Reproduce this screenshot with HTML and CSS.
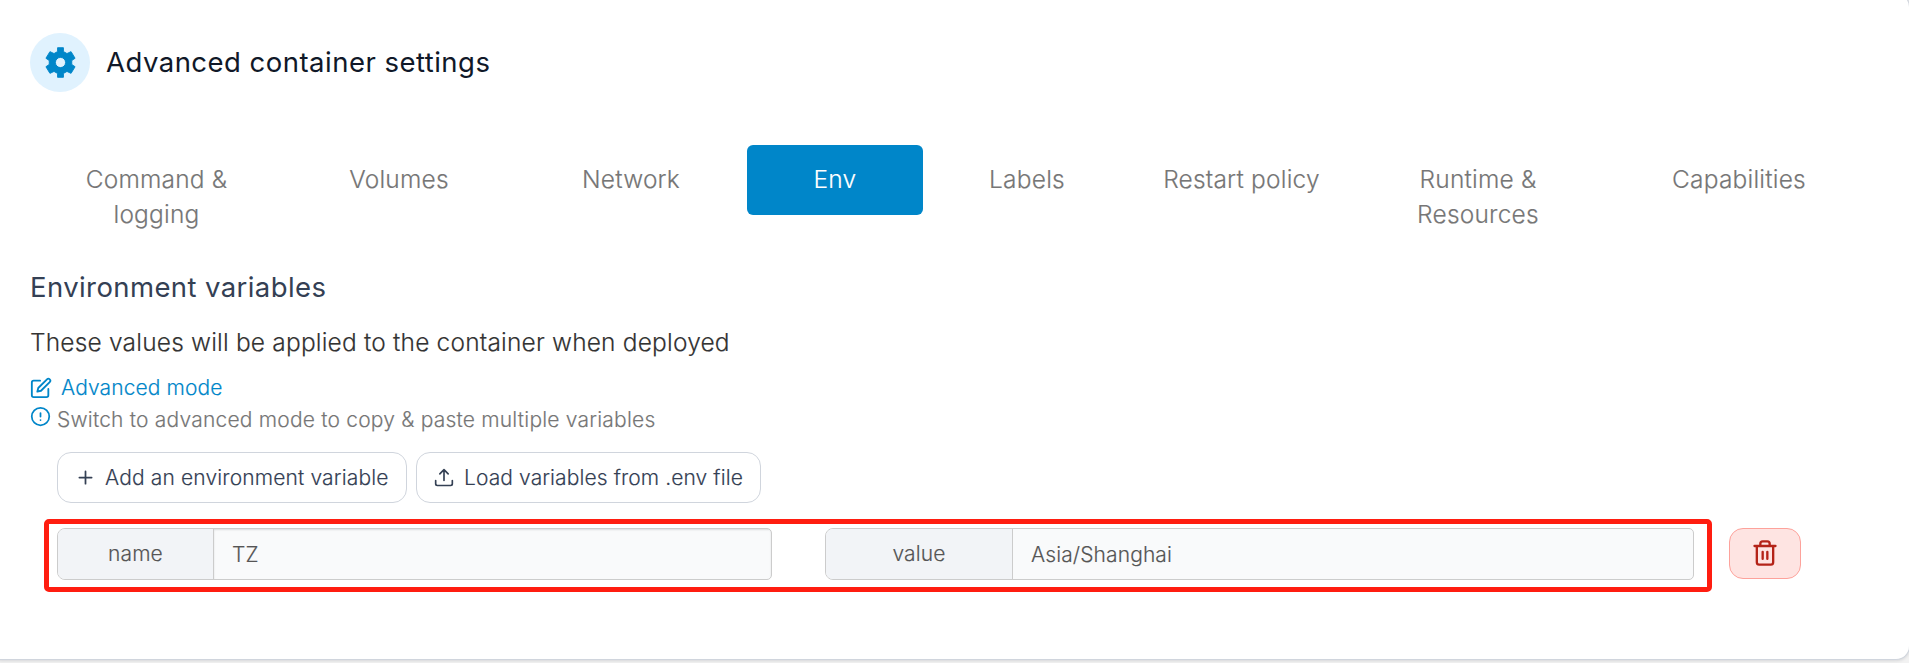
FILE: index.html
```html
<!DOCTYPE html>
<html lang="en">
<head>
<meta charset="utf-8">
<title>Advanced container settings</title>
<link rel="stylesheet" href="styles.css">
</head>
<body>
<main class="card">
  <header class="header">
    <span class="header-icon">
      <svg width="37" height="37" viewBox="0 0 24 24" fill="currentColor"><path fill-rule="evenodd" d="M10.100 2.400h3.800v2.500l2.300 1.300 2.650-1.250 2.600 4.300-2.150 1.500v2.500l2.150 1.500-2.600 4.300-2.650-1.250-2.300 1.300v2.500h-3.800v-2.500l-2.300-1.300-2.650 1.250-2.600-4.300 2.150-1.500v-2.500l-2.150-1.500 2.600-4.300 2.650 1.250 2.300-1.300zM12 8.700a3.300 3.300 0 1 0 0 6.600 3.300 3.300 0 0 0 0-6.600z" stroke="currentColor" stroke-width=".6" stroke-linejoin="round"/></svg>
    </span>
    <h1 class="title">Advanced container settings</h1>
  </header>

  <nav class="tabs">
    <a class="tab">Command &amp;<br>logging</a>
    <a class="tab">Volumes</a>
    <a class="tab">Network</a>
    <a class="tab tab-active">Env</a>
    <a class="tab">Labels</a>
    <a class="tab">Restart policy</a>
    <a class="tab">Runtime &amp;<br>Resources</a>
    <a class="tab">Capabilities</a>
  </nav>

  <h2 class="section-title">Environment variables</h2>
  <p class="description">These values will be applied to the container when deployed</p>

  <a class="mode-link">
    <svg class="icon" width="22" height="22" viewBox="0 0 24 24"><path d="M11 4H4a2 2 0 0 0-2 2v14a2 2 0 0 0 2 2h14a2 2 0 0 0 2-2v-7"/><path d="M18.500 2.500a2.121 2.121 0 0 1 3 3L12 15l-4 1 1-4z"/></svg>
    <span class="mode-text">Advanced mode</span>
  </a>
  <p class="hint">
    <svg class="icon hint-icon" width="21" height="21" viewBox="0 0 24 24"><circle cx="12" cy="12" r="10"/><path d="M12 8v4M12 16h.01"/></svg>
    <span class="hint-text">Switch to advanced mode to copy &amp; paste multiple variables</span>
  </p>

  <div class="actions">
    <button class="button button-add"><svg class="icon" width="21" height="21" viewBox="0 0 24 24"><path d="M12 5v14M5 12h14"/></svg><span class="add-text">Add an environment variable</span></button>
    <button class="button button-load"><svg class="icon" width="20" height="20" viewBox="0 0 24 24"><path d="M22 15v4a2 2 0 0 1-2 2H4a2 2 0 0 1-2-2v-4M17 7l-5-5-5 5M12 2v13"/></svg><span class="load-text">Load variables from .env file</span></button>
  </div>

  <div class="row">
    <div class="highlight">
      <div class="field field-name">
        <span class="label">name</span>
        <span class="value value-inset">TZ</span>
      </div>
      <div class="field field-value">
        <span class="label">value</span>
        <span class="value">Asia/Shanghai</span>
      </div>
    </div>
    <button class="delete" aria-label="Delete"><svg class="icon" width="28" height="28" viewBox="0 0 24 24"><path d="M3 6h18M19 6v14a2 2 0 0 1-2 2H7a2 2 0 0 1-2-2V6M8 6V4a2 2 0 0 1 2-2h4a2 2 0 0 1 2 2v2M10 11v6M14 11v6"/></svg></button>
  </div>
</main>
</body>
</html>
```
FILE: styles.css
```css
* { box-sizing: border-box; }

body {
  margin: 0;
  height: 663px;
  overflow: hidden;
  background: #f2f2f2;
  font-family: Inter, "Liberation Sans", sans-serif;
  font-weight: 300;
  -webkit-text-stroke: 0.15px currentColor;
  color: #333;
}

.card {
  height: 667px;
  margin-top: -7px;
  margin-left: -1px;
  margin-right: -1px;
  padding: 39px 34px 0 31px;
  background: #fff;
  border: 1px solid #d0d5dd;
  border-left: 0;
  border-radius: 0 14px 14px 0;
  box-shadow: 0 1px 3px rgba(16, 24, 40, 0.12);
}

h1, h2, p { margin: 0; }

.icon {
  flex: none;
  fill: none;
  stroke: currentColor;
  stroke-width: 2;
  stroke-linecap: round;
  stroke-linejoin: round;
}

.header {
  display: flex;
  align-items: center;
  gap: 16px;
  height: 59px;
}

.header-icon {
  display: flex;
  align-items: center;
  justify-content: center;
  width: 60px;
  height: 59px;
  border-radius: 50%;
  background: #e0f2fe;
  color: #0086c9;
}

.title {
  margin-top: -1px;
  font-size: 27.5px;
  font-weight: 400;
  -webkit-text-stroke: 0;
  line-height: 40px;
  letter-spacing: 0.48px;
  color: #101828;
}

.tabs {
  display: grid;
  grid-template-columns: 253px 232px 232px 176px 208px 221px 252px 270px;
  align-items: start;
  height: 88px;
  margin-top: 53px;
}

.tab {
  padding: 17px 0 18px;
  font-size: 24.5px;
  line-height: 35px;
  letter-spacing: 0.2px;
  text-align: center;
  color: #767676;
}

.tab-active {
  border-radius: 6px;
  background: #0086c9;
  color: #fff;
}

.section-title {
  margin-top: 34px;
  font-size: 27.5px;
  font-weight: 400;
  -webkit-text-stroke: 0;
  line-height: 40px;
  letter-spacing: 0.4px;
  color: #344054;
}

.description {
  margin-top: 18px;
  font-size: 24.5px;
  line-height: 35px;
  letter-spacing: 0.18px;
}

.mode-link {
  display: flex;
  align-items: center;
  gap: 9px;
  height: 31px;
  margin-top: 12px;
  font-size: 21px;
  letter-spacing: 0.1px;
  color: #0086c9;
}

.hint {
  display: flex;
  gap: 6px;
  height: 34px;
  font-size: 21px;
  line-height: 34px;
  letter-spacing: 0.2px;
  color: #767676;
}

.hint-icon {
  margin-top: 3px;
  color: #0086c9;
}

.actions {
  display: flex;
  gap: 9px;
  margin: 15px 0 0 27px;
}

.button {
  display: flex;
  align-items: center;
  height: 51px;
  padding: 0 0 0 17px;
  border: 1px solid #d0d5dd;
  border-radius: 14px;
  background: #fff;
  font: inherit;
  font-size: 21px;
  white-space: nowrap;
  color: #344054;
}

.button-add {
  width: 350px;
  gap: 9px;
  letter-spacing: 0.14px;
}

.button-load {
  width: 345px;
  gap: 10px;
  letter-spacing: 0.09px;
}

.row {
  display: flex;
  align-items: center;
  gap: 17px;
  margin: 16px 0 0 14px;
}

.highlight {
  display: flex;
  gap: 53px;
  width: 1668px;
  height: 73px;
  padding: 4px 8px;
  border: 5px solid #ff1d10;
  border-radius: 5px;
}

.field {
  display: grid;
  height: 52px;
  border: 1px solid #ccc;
  border-radius: 8px 5px 5px 8px;
  background: #f9fafb;
  font-size: 21px;
  line-height: 50px;
  letter-spacing: 0.1px;
  color: #555;
  overflow: hidden;
}

.field-name { width: 715px; grid-template-columns: 156px 1fr; }
.field-value { width: 869px; grid-template-columns: 187px 1fr; }

.label {
  border-right: 1px solid #ccc;
  background: #f2f4f7;
  text-align: center;
}

.value { padding: 1px 0 0 18px; }
.value-inset { box-shadow: inset 0 1px 2px rgba(0, 0, 0, 0.12); }

.delete {
  display: flex;
  align-items: center;
  justify-content: center;
  width: 72px;
  height: 51px;
  margin-top: -5px;
  padding: 0;
  border: 1px solid #fda29b;
  border-radius: 14px;
  background: #fee4e2;
  color: #b42318;
}
```
